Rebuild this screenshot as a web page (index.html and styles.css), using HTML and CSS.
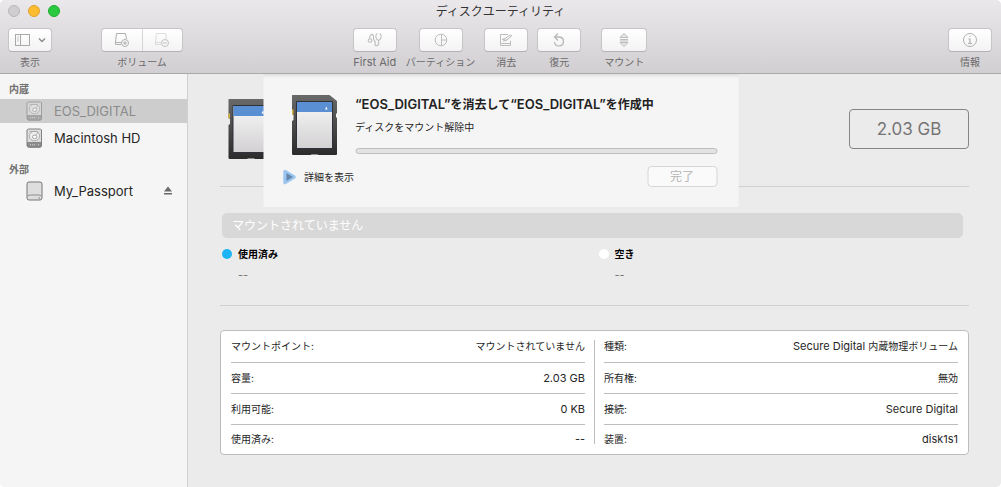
FILE: index.html
```html
<!DOCTYPE html>
<html lang="ja">
<head>
<meta charset="utf-8">
<title>ディスクユーティリティ</title>
<link rel="stylesheet" href="styles.css">
</head>
<body>
<svg class="defs" aria-hidden="true">
  <defs>
    <linearGradient id="shell" x1="0" y1="0" x2="0" y2="1"><stop offset="0" stop-color="#696969"/><stop offset="0.5" stop-color="#4a4a4a"/><stop offset="1" stop-color="#2b2b2b"/></linearGradient>
    <linearGradient id="label" x1="0" y1="0" x2="0" y2="1"><stop offset="0" stop-color="#f7f7f7"/><stop offset="1" stop-color="#d3d1d3"/></linearGradient>
    <symbol id="sd" viewBox="0 0 48 62">
      <path d="M1 1H38L45.500 7V19L44.500 20V23L45.500 24V60Q45.500 61 44.500 61H27L26 60.500H20L19 61H2Q0.500 61 0.500 60V27L2 26V21L0.500 20V2Q0.500 1 1 1Z" fill="url(#shell)"/>
      <path d="M0.500 15.500h1.500v5H0.500z" fill="#d6b33c"/>
      <rect x="4.500" y="7" width="37" height="48" rx="1" fill="#2f3238"/>
      <rect x="5.500" y="8" width="35" height="46" fill="url(#label)"/>
      <rect x="5.500" y="8" width="35" height="10" fill="#5b8fd4"/>
      <path d="M35 12.500l1 3h-2.500z" fill="#fff"/>
    </symbol>
    <symbol id="hdd" viewBox="0 0 17 20">
      <path d="M2.500 1h12l1 1v16l-1 1.200h-12L1 18V2z" fill="#dedede" stroke="#808080"/>
      <path d="M1.500 14.500h14v3.500l-1 1h-12l-1-1z" fill="#8c8c8c" stroke="#777" stroke-width=".7"/>
      <path d="M4 16.800h1M6 16.800h1M8 16.800h1M12 16.800h1" stroke="#ddd"/>
      <ellipse cx="8.500" cy="8" rx="5.200" ry="4.700" fill="#eee" stroke="#9d9d9d" stroke-width=".8"/>
      <ellipse cx="8.700" cy="8.800" rx="2.200" ry="1.800" fill="#fff" stroke="#8d8d8d" stroke-width=".8"/>
      <path d="M3.500 3.500h8M10 7l2-3" stroke="#9d9d9d" stroke-width=".7"/>
    </symbol>
  </defs>
</svg>
<div class="window">
  <header class="titlebar">
    <div class="caption">
      <div class="lights">
        <button class="light light-off" aria-label="閉じる"></button>
        <button class="light light-min" aria-label="しまう"></button>
        <button class="light light-zoom" aria-label="拡大"></button>
      </div>
      <h1 class="title">ディスクユーティリティ</h1>
    </div>
    <div class="toolbar">
      <div class="tools tools-left">
        <div class="tool">
          <button class="tool-btn" aria-labelledby="t-view">
            <svg width="32" height="16" viewBox="0 0 32 16" fill="none" stroke="#a9a9a9"><rect x="1.500" y="2.500" width="14" height="11"/><path d="M6.500 2.500v11"/><path d="M3 5h2M3 7h2M3 9h2" stroke="#c4c4c4"/><path d="M25 6.500l3 3 3-3" stroke="#8b8b8b" stroke-width="1.400"/></svg>
          </button>
          <span class="tool-label" id="t-view">表示</span>
        </div>
        <div class="tool">
          <div class="segmented" role="group" aria-labelledby="t-vol">
            <button class="segment" aria-label="追加"><svg width="16" height="16" viewBox="0 0 16 16" fill="none" stroke="#b0b0b0"><path d="M7 12.500H1.500V10L2.500 1.500h9l1 5.500M1.500 10.500H7"/><circle cx="11" cy="11" r="3.500"/><path d="M9 11h4M11 9v4"/></svg></button>
            <button class="segment segment-dim" aria-label="削除"><svg width="16" height="16" viewBox="0 0 16 16" fill="none" stroke="#b4b4b4"><path d="M7 12.500H1.500V10L2.500 1.500h9l1 5.500M1.500 10.500H7" opacity=".5"/><circle cx="11" cy="11" r="3.500"/><path d="M9 11h4"/></svg></button>
          </div>
          <span class="tool-label" id="t-vol">ボリューム</span>
        </div>
      </div>
      <div class="tools tools-center">
        <div class="tool">
          <button class="tool-btn" aria-labelledby="t-aid"><svg width="16" height="16" viewBox="0 0 16 16" fill="none" stroke="#bdbdbd" stroke-width="1.100"><circle cx="3" cy="8.500" r="1.800"/><path d="M2.500 6.500C3 3 4.500 1.500 6 3s-.5 3.500 1 5 1.500 2.500 1 4 1.500 2.500 3 1 .5-3 .5-4.500M10.500 2H9.500c-1.500 2-.5 5.500 2 6.500 2.500-1 3.500-4.500 2-6.500h-1"/></svg></button>
          <span class="tool-label tool-label-latin" id="t-aid">First Aid</span>
        </div>
        <div class="tool">
          <button class="tool-btn" aria-labelledby="t-part"><svg width="16" height="16" viewBox="0 0 16 16" fill="none" stroke="#bdbdbd"><circle cx="8" cy="8" r="5.800"/><path d="M8.500 2v12M8.500 8H14"/></svg></button>
          <span class="tool-label" id="t-part">パーティション</span>
        </div>
        <div class="tool">
          <button class="tool-btn" aria-labelledby="t-erase"><svg width="16" height="16" viewBox="0 0 16 16" fill="none" stroke="#bdbdbd"><path d="M10 2.500H2.500V13.500h10V9M2.500 11.500h10"/><path d="M5 9l3-.5 6-5M4 7.500c2-1 3 1.500 5 .5l4.500-4.500-1.500-.5L7 6.500z"/></svg></button>
          <span class="tool-label" id="t-erase">消去</span>
        </div>
        <div class="tool">
          <button class="tool-btn" aria-labelledby="t-restore"><svg width="16" height="16" viewBox="0 0 16 16" fill="none" stroke="#b8b8b8" stroke-width="1.300"><path d="M4 5H8.500a4.500 4.500 0 1 1-5 5M7 1.500L3.500 5 7 8.500"/></svg></button>
          <span class="tool-label" id="t-restore">復元</span>
        </div>
        <div class="tool tool-mount">
          <button class="tool-btn tool-btn-wide" aria-labelledby="t-mount"><svg width="16" height="16" viewBox="0 0 16 16" fill="#e4e4e4" stroke="#bdbdbd"><path d="M8 1.500L12 5.500H4zM8 14.500L12 10.500H4z"/><path d="M4 7.500h8M4 9h8"/></svg></button>
          <span class="tool-label" id="t-mount">マウント</span>
        </div>
      </div>
      <div class="tools tools-right">
        <div class="tool">
          <button class="tool-btn" aria-labelledby="t-info"><svg width="16" height="16" viewBox="0 0 16 16" fill="none" stroke="#b0b0b0"><circle cx="8" cy="8" r="6.500"/><path d="M6.500 7H8v4.500M6 11.500h4M7.400 4.500h1.200" stroke-width="1.200"/></svg></button>
          <span class="tool-label" id="t-info">情報</span>
        </div>
      </div>
    </div>
  </header>

  <div class="body">
    <nav class="sidebar">
      <h2 class="side-heading">内蔵</h2>
      <ul class="side-list">
        <li class="side-row side-row-selected"><button class="side-item"><svg class="drive drive-dim" width="17" height="20"><use href="#hdd"/></svg>EOS_DIGITAL</button></li>
        <li class="side-row"><button class="side-item"><svg class="drive" width="17" height="20"><use href="#hdd"/></svg>Macintosh HD</button></li>
      </ul>
      <h2 class="side-heading">外部</h2>
      <ul class="side-list">
        <li class="side-row">
          <button class="side-item"><svg class="drive" width="17" height="20" viewBox="0 0 17 20"><rect x="1" y="1" width="15" height="18" rx="2" fill="#dedede" stroke="#777"/><path d="M1.500 15Q3 14 4 14h9q1 0 2.500 1" fill="none" stroke="#8c8c8c"/><path d="M12.500 17h1.500" stroke="#777"/></svg>My_Passport</button>
          <button class="eject" aria-label="取り出す"><svg width="10" height="10" viewBox="0 0 10 10" fill="#6a6a6a"><path d="M5 0.500L9 5.500H1zM1 7h8v1.500H1z"/></svg></button>
        </li>
      </ul>
    </nav>

    <main class="main">
      <section class="summary">
        <svg class="sd" width="48" height="62"><use href="#sd"/></svg>
        <div class="size">2.03 GB</div>
      </section>
      <section class="usage">
        <div class="usage-bar">マウントされていません</div>
        <dl class="legend">
          <div class="legend-item"><dt class="legend-name"><span class="dot dot-used"></span>使用済み</dt><dd class="legend-value">--</dd></div>
          <div class="legend-item"><dt class="legend-name"><span class="dot dot-free"></span>空き</dt><dd class="legend-value">--</dd></div>
        </dl>
      </section>
      <section class="details">
        <table class="facts">
          <tr><th scope="row">マウントポイント:</th><td>マウントされていません</td></tr>
          <tr><th scope="row">容量:</th><td class="latin">2.03 GB</td></tr>
          <tr><th scope="row">利用可能:</th><td class="latin">0 KB</td></tr>
          <tr><th scope="row">使用済み:</th><td class="latin">--</td></tr>
        </table>
        <div class="rule"></div>
        <table class="facts">
          <tr><th scope="row">種類:</th><td><span class="latin">Secure Digital </span>内蔵物理ボリューム</td></tr>
          <tr><th scope="row">所有権:</th><td>無効</td></tr>
          <tr><th scope="row">接続:</th><td class="latin">Secure Digital</td></tr>
          <tr><th scope="row">装置:</th><td class="latin">disk1s1</td></tr>
        </table>
      </section>
    </main>

    <div class="sheet" role="dialog" aria-labelledby="sheet-title">
      <div class="sheet-top">
        <svg class="sd" width="48" height="62"><use href="#sd"/></svg>
        <div class="sheet-text">
          <h2 class="sheet-title" id="sheet-title"><span class="name">“EOS_DIGITAL”</span>を消去して<span class="name">“EOS_DIGITAL”</span>を作成中</h2>
          <label class="sheet-status" for="erase-progress">ディスクをマウント解除中</label>
          <progress class="progress" id="erase-progress" value="0" max="100"></progress>
        </div>
      </div>
      <div class="sheet-bottom">
        <button class="disclosure"><svg width="14" height="16" viewBox="0 0 14 16"><path d="M2.500 2.500L11.500 8 2.500 13.500z" fill="#6590bd" stroke="#9cc6f0" stroke-width="3.500" stroke-linejoin="round"/><path d="M4 4l6.500 4L4 12z" fill="#6688ad"/></svg>詳細を表示</button>
        <button class="done" disabled>完了</button>
      </div>
    </div>
  </div>
</div>
</body>
</html>
```
FILE: styles.css
```css
* { box-sizing: border-box; }

body {
  margin: 0;
  background: #fff;
  color: #262626;
  font: 10px/16px Inter, "Noto Sans CJK JP", sans-serif;
}

button {
  margin: 0;
  padding: 0;
  border: 0;
  background: none;
  color: inherit;
  font: inherit;
}

svg { display: block; flex: none; }
h1, h2, ul, dl, dd { margin: 0; padding: 0; }
ul { list-style: none; }
.defs { position: absolute; width: 0; height: 0; }

.window {
  display: flex;
  flex-direction: column;
  min-height: 100vh;
  border-radius: 5px;
  overflow: hidden;
  background: #ebebeb;
}

/* Title bar and toolbar */
.titlebar {
  height: 74px;
  border-bottom: 1px solid #aba9ab;
  background: linear-gradient(#eae8ea, #d1cfd1);
}
.caption {
  display: grid;
  grid-template-columns: 1fr auto 1fr;
  align-items: center;
  height: 22px;
  padding: 0 8px;
}
.lights { display: flex; gap: 8px; }
.light { width: 12px; height: 12px; border: 1px solid; border-radius: 50%; }
.light-off { background: #cfcdcf; border-color: #b9b7b9; }
.light-min { background: #fdbc2f; border-color: #dfa030; }
.light-zoom { background: #2ac940; border-color: #1fac2f; }
.title { padding-top: 2px; color: #333; font-size: 12px; font-weight: 400; }

.toolbar {
  display: grid;
  grid-template-columns: 1fr auto 1fr;
  padding: 6px 9px 0 8px;
}
.tools { display: flex; gap: 9px; }
.tools-left { gap: 49px; }
.tools-right { justify-content: flex-end; }
.tool { display: flex; flex-direction: column; align-items: center; gap: 2px; }
.tool-mount { margin-left: 11px; }
.tool-label { color: #6c6a6c; white-space: nowrap; }
.tool-label-latin { font-size: 11px; }
.tool-btn, .segmented {
  display: flex;
  align-items: center;
  justify-content: center;
  width: 44px;
  height: 24px;
  border: 1px solid #c6c4c6;
  border-bottom-color: #b3b1b3;
  border-radius: 4px;
  background: linear-gradient(#fff, #f3f3f3);
}
.tool-btn-wide { width: 46px; }
.segmented { width: 82px; }
.segment { display: flex; flex: 1; align-items: center; justify-content: center; height: 22px; }
.segment + .segment { border-left: 1px solid #cfcdcf; }
.segment-dim { opacity: .8; }

/* Body */
.body { position: relative; display: flex; flex: 1; }

.sidebar {
  flex: none;
  width: 188px;
  padding-top: 7px;
  border-right: 1px solid #d0d0d0;
  background: #f5f5f5;
}
.side-heading { padding-left: 9px; color: #717171; font-size: 10px; font-weight: 700; }
.side-list { display: grid; gap: 3px; padding: 2px 0 11px; }
.side-row { display: flex; align-items: center; height: 24px; padding-right: 14px; }
.side-row-selected { background: #cdcdcd; }
.side-row-selected .side-item { color: #8b8b8b; }
.side-item {
  display: flex;
  flex: 1;
  align-items: center;
  gap: 11px;
  padding-left: 26px;
  font-size: 13px;
}
.drive-dim { opacity: .6; }

.main { flex: 1; padding: 0 32px; }
.summary {
  display: flex;
  align-items: center;
  justify-content: space-between;
  padding: 24px 0 26px 8px;
  border-bottom: 1px solid #d0d0d0;
}
.size {
  width: 120px;
  border: 1px solid #858585;
  border-radius: 4px;
  color: #757575;
  font-size: 17px;
  line-height: 38px;
  text-align: center;
}
.usage { padding: 26px 6px 22px 2px; border-bottom: 1px solid #d0d0d0; }
.usage-bar {
  padding: 1px 10px 0;
  border-radius: 5px;
  background: #d8d8d8;
  color: #fff;
  font-size: 12px;
  line-height: 24px;
}
.legend { display: grid; grid-template-columns: 1fr 1fr; gap: 12px; padding-top: 8px; }
.legend-item { display: grid; gap: 5px; }
.legend-name { display: flex; align-items: center; gap: 6px; color: #000; font-weight: 700; }
.legend-value { padding-left: 16px; color: #757575; font-size: 11px; }
.dot { width: 10px; height: 10px; border-radius: 50%; }
.dot-used { background: #1db4f6; }
.dot-free { background: #fff; }

.details {
  display: grid;
  grid-template-columns: 1fr 1px 1fr;
  gap: 9px;
  margin-top: 24px;
  padding: 0 10px;
  border: 1px solid #bdbdbd;
  border-radius: 4px;
  background: #fff;
}
.rule { margin: 9px 0 10px; background: #bdbdbd; }
.facts { width: 100%; border-collapse: collapse; }
.facts th, .facts td { height: 31px; padding: 0; border-bottom: 1px solid #bdbdbd; white-space: nowrap; }
.facts th { font-weight: 400; text-align: left; }
.facts td { text-align: right; }
.facts tr:last-child > * { height: 30px; border-bottom: 0; }
.facts .latin { font-size: 11px; }

/* Progress sheet hanging from the toolbar */
.sheet {
  position: absolute;
  top: 0;
  left: 50%;
  width: 475px;
  padding: 20px 21px 20px 28px;
  background: linear-gradient(#dedede, #f5f5f5 4px);
  transform: translateX(-50%);
}
.sheet-top { display: flex; gap: 16px; }
.sheet-text { display: flex; flex: 1; flex-direction: column; gap: 6px; padding-top: 2px; }
.sheet-title { color: #222; font-size: 12px; line-height: 16px; font-weight: 700; white-space: nowrap; }
.name { font-size: 13px; font-weight: 600; }
.progress {
  appearance: none;
  width: 100%;
  height: 6px;
  margin-top: 7px;
  border: 1px solid #bebebe;
  border-radius: 3px;
  background: #e2e2e2;
}
.progress::-webkit-progress-bar { background: transparent; }
.sheet-bottom { display: flex; align-items: center; justify-content: space-between; padding-top: 10px; }
.disclosure { display: flex; align-items: center; gap: 8px; margin-left: -9px; }
.done {
  width: 70px;
  height: 21px;
  border: 1px solid #d6d6d6;
  border-radius: 4px;
  background: #fafafa;
  color: #b3b3b3;
  font-size: 12px;
}
```
